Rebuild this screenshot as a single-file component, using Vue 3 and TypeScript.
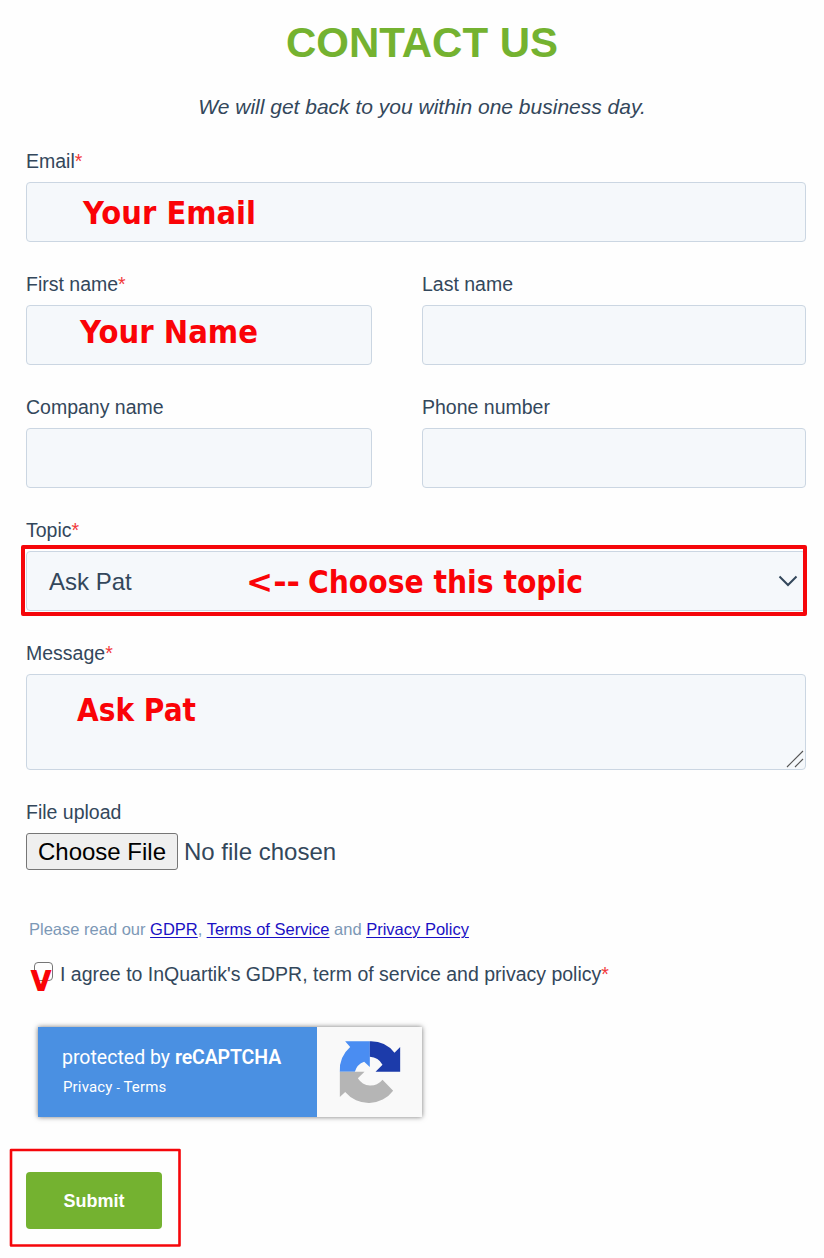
<script setup lang="ts">
interface Note {
  text: string
  x: number
  y: number
  width: number
}

const notes: Note[] = [
  { text: 'Your Email', x: 83, y: 224, width: 173 },
  { text: 'Your Name', x: 80, y: 343, width: 178 },
  { text: '<--', x: 246, y: 593, width: 54 },
  { text: 'Choose this topic', x: 308, y: 593, width: 275 },
  { text: 'Ask Pat', x: 77, y: 721, width: 119 },
]
</script>

<template>
  <main class="page">
    <h1>CONTACT US</h1>
    <p class="lead">We will get back to you within one business day.</p>

    <form class="form" @submit.prevent>
      <div class="group">
        <label>Email<i>*</i></label>
        <div class="field"></div>
      </div>
      <div class="row">
        <div class="group">
          <label>First name<i>*</i></label>
          <div class="field"></div>
        </div>
        <div class="group">
          <label>Last name</label>
          <div class="field"></div>
        </div>
      </div>
      <div class="row">
        <div class="group">
          <label>Company name</label>
          <div class="field"></div>
        </div>
        <div class="group">
          <label>Phone number</label>
          <div class="field"></div>
        </div>
      </div>
      <div class="group">
        <label class="topic">Topic<i>*</i></label>
        <div class="field select">
          <span>Ask Pat</span>
          <svg width="20" height="12" viewBox="0 0 20 12">
            <path d="M1.5 1.5 L10 10 L18.5 1.5" fill="none" stroke="#33475b" stroke-width="2" />
          </svg>
        </div>
      </div>
      <div class="group">
        <label>Message<i>*</i></label>
        <div class="field area">
          <svg width="18" height="18" viewBox="0 0 18 18">
            <path d="M1 17 L17 1 M9 17 L17 9" stroke="#555" stroke-width="1.1" />
          </svg>
        </div>
      </div>
      <div class="group">
        <label>File upload</label>
        <div class="file">
          <button type="button" class="choose">Choose File</button>
          <span>No file chosen</span>
        </div>
      </div>
    </form>

    <p class="legal">
      Please read our <a href="#">GDPR</a>, <a href="#">Terms of Service</a> and <a href="#">Privacy Policy</a>
    </p>

    <div class="agree">
      <span class="box"></span>
      <span class="agree-text">I agree to InQuartik's GDPR, term of service and privacy policy<i>*</i></span>
    </div>

    <div class="captcha">
      <div class="captcha-text">
        <div class="protected">protected by <b>reCAPTCHA</b></div>
        <div class="terms">Privacy <small>-</small> Terms</div>
      </div>
      <div class="captcha-logo">
        <svg width="62" height="62" viewBox="88 79 185 186">
          <path fill="#4a8df2" d="M106 80H180V157L163 141A45 45 0 0 0 135 171H90A92 92 0 0 1 121 97Z" />
          <path fill="#1c3baa" d="M180 80A91 91 0 0 1 254 114L271 97V171H197L218 150A45 45 0 0 0 180 126Z" />
          <path fill="#b5b5b5" d="M90 171H164L144 191A45 45 0 0 0 218 195L250 228A92 92 0 0 1 106 232L90 247Z" />
        </svg>
      </div>
    </div>

    <button type="button" class="submit">Submit</button>

    <svg class="notes" width="824" height="1258" viewBox="0 0 824 1258">
      <rect x="23" y="547" width="782" height="67" fill="none" stroke="#f5060a" stroke-width="4" stroke-linejoin="round" />
      <rect x="11" y="1150" width="168.5" height="95.5" fill="none" stroke="#f5060a" stroke-width="2.6" stroke-linejoin="round" />
      <text
        v-for="note in notes"
        :key="note.text"
        :x="note.x"
        :y="note.y"
        :textLength="note.width"
        lengthAdjust="spacingAndGlyphs"
      >{{ note.text }}</text>
      <text class="tick" x="30" y="991" textLength="22" lengthAdjust="spacingAndGlyphs">v</text>
    </svg>
  </main>
</template>

<style>
body {
  margin: 0;
  background: #fff;
}
</style>

<style scoped>
.page {
  position: relative;
  box-sizing: border-box;
  width: 824px;
  height: 1258px;
  padding: 18px 18px 0 26px;
  overflow: hidden;
  background: #fefefe;
  color: #33475b;
  font-family: "Liberation Sans", Arial, sans-serif;
  font-size: 19.5px;
}
h1 {
  margin: 0 0 0 12px;
  height: 50px;
  color: #74b230;
  font-size: 42px;
  line-height: 50px;
  text-align: center;
}
.lead {
  margin: 25px 0 29px 12px;
  height: 27px;
  font-size: 21px;
  font-style: italic;
  line-height: 27px;
  text-align: center;
}
i {
  color: #f2383a;
  font-style: normal;
}
.form {
  display: flex;
  flex-direction: column;
  gap: 30px;
}
.row {
  display: grid;
  grid-template-columns: 346px 384px;
  column-gap: 50px;
}
.group label {
  display: block;
  height: 24px;
  margin-bottom: 9px;
  line-height: 24px;
}
.field {
  box-sizing: border-box;
  height: 60px;
  border: 1px solid #cbd6e2;
  border-radius: 4px;
  background: #f5f8fb;
}
.select {
  display: flex;
  align-items: center;
  justify-content: space-between;
  padding: 0 7px 0 22px;
  font-size: 24px;
}
.select span {
  padding-top: 2px;
}
.area {
  display: flex;
  align-items: flex-end;
  justify-content: flex-end;
  height: 96px;
  padding: 0 1px 1px 0;
}
.file {
  display: flex;
  align-items: center;
  gap: 6px;
  height: 37px;
  font-size: 24px;
}
.choose {
  box-sizing: border-box;
  width: 152px;
  height: 37px;
  padding: 0;
  border: 1px solid #767676;
  border-radius: 3px;
  background: #efefef;
  color: #000;
  font: 24px "Liberation Sans", Arial, sans-serif;
}
.legal {
  margin: 48px 0 0 3px;
  height: 22px;
  color: #7c98b6;
  font-size: 16.5px;
  line-height: 22px;
}
.legal a {
  color: #1a10c4;
  text-underline-offset: 2px;
  text-decoration-thickness: 1px;
}
.agree {
  display: flex;
  margin: 22px 0 0 8px;
  height: 24px;
  line-height: 24px;
}
.box {
  box-sizing: border-box;
  width: 19px;
  height: 19px;
  margin-right: 7px;
  border: 1px solid #767676;
  border-radius: 4px;
}
.captcha {
  display: flex;
  width: 384px;
  height: 90px;
  margin: 41px 0 0 12px;
  box-shadow: 0 0 5px #777;
  font-family: Roboto, sans-serif;
}
.captcha-text {
  box-sizing: border-box;
  width: 279px;
  padding: 18px 0 0 24px;
  background: #4a90e2;
  color: #fff;
}
.protected {
  height: 26px;
  font-size: 19.5px;
  line-height: 26px;
}
.protected b {
  font-weight: 600;
  letter-spacing: -0.1px;
}
.terms {
  margin: 6px 0 0 1px;
  font-size: 15px;
  letter-spacing: 0.15px;
  line-height: 20px;
}
.terms small {
  font-size: 12px;
}
.captcha-logo {
  display: flex;
  flex: 1;
  align-items: center;
  justify-content: center;
  background: #f9f9f9;
}
.submit {
  display: block;
  width: 136px;
  height: 57px;
  margin-top: 55px;
  padding: 2px 0 0;
  border: 0;
  border-radius: 4px;
  background: #74b230;
  color: #fff;
  font: bold 18px "Liberation Sans", Arial, sans-serif;
}
.notes {
  position: absolute;
  top: 0;
  left: 0;
  pointer-events: none;
}
.notes text {
  fill: #fa0307;
  font: bold 32px "DejaVu Sans", sans-serif;
}
.notes .tick {
  font-size: 38px;
}
</style>
